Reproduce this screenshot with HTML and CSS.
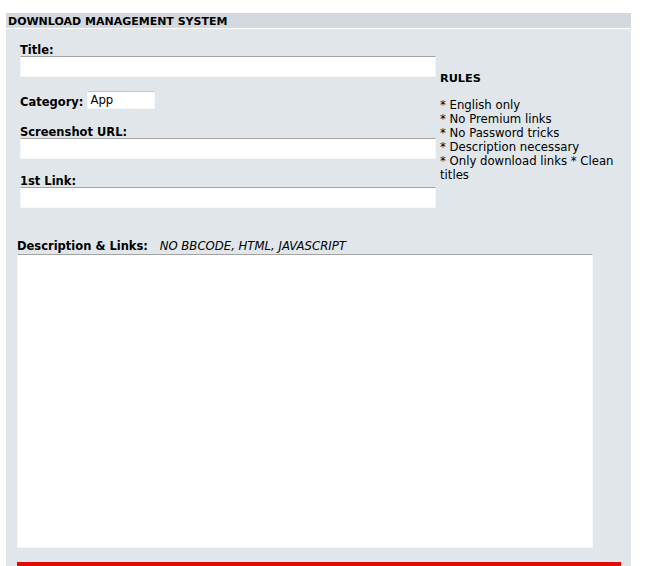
FILE: index.html
```html
<!DOCTYPE html>
<html lang="en">

<head>
  <meta charset="UTF-8">
  <title>Download Management System</title>
  <link rel="stylesheet" href="styles.css">
</head>

<body>
  <div class="box">
    <div class="box-head">DOWNLOAD MANAGEMENT SYSTEM</div>
    <div class="box-body">
      <div class="upload-row">
        <div class="fields">
          <label class="field-label">Title:</label>
          <input type="text" class="wide-input">

          <div class="category-row">
            <label class="field-label">Category:</label>
            <input type="text" class="small-input" value="App">
          </div>

          <label class="field-label">Screenshot URL:</label>
          <input type="text" class="wide-input">

          <label class="field-label link-label">1st Link:</label>
          <input type="text" class="wide-input">
        </div>

        <div class="rules">
          <h4>RULES</h4>
          <p>* English only<br>
            * No Premium links<br>
            * No Password tricks<br>
            * Description necessary<br>
            * Only download links * Clean titles</p>
        </div>
      </div>

      <div class="desc">
        <div class="desc-label"><b>Description &amp; Links:</b> <i>NO BBCODE, HTML, JAVASCRIPT</i></div>
        <textarea class="desc-box"></textarea>
      </div>

      <div class="red-bar"></div>
    </div>
  </div>
</body>

</html>
```

FILE: styles.css
```css
* {
  margin: 0;
  padding: 0;
  box-sizing: border-box;
}

body {
  background: white;
  color: #000;
  font-family: 'DejaVu Sans', Verdana, sans-serif;
  font-size: 11.7px;
}

.box {
  margin: 13px 0 0 6px;
  width: 625px;
}

.box-head {
  background: #d3d9df;
  height: 16px;
  line-height: 17px;
  padding-left: 2px;
  font-size: 11px;
  font-weight: bold;
  border-bottom: 1px solid white;
}

.box-body {
  background: #e1e6ea;
  padding: 12px 0 40px 11px;
}

.upload-row {
  display: flex;
}

.fields {
  width: 419px;
  padding-left: 3px;
}

.field-label {
  display: block;
  font-size: 11.5px;
  font-weight: bold;
  line-height: 14px;
  padding-top: 2px;
  margin-bottom: -1px;
}

.wide-input {
  display: block;
  width: 416px;
  height: 21px;
  border: 1px solid #f4f6f7;
  border-top-color: #a3a3a3;
  background: white;
  font-family: inherit;
  font-size: 11.7px;
}

.category-row {
  display: flex;
  align-items: center;
  gap: 4px;
  margin: 14px 0 14px;
}

.category-row .field-label {
  padding-top: 4px;
  margin-bottom: 0;
}

.small-input {
  width: 68px;
  height: 18px;
  border: 1px solid #f4f6f7;
  border-top-color: #c4c4c4;
  padding-left: 2px;
  background: white;
  font-family: inherit;
  font-size: 11.7px;
}

.link-label {
  margin-top: 13px;
}

.rules {
  padding: 31px 0 0 4px;
  width: 190px;
  line-height: 14px;
}

.rules h4 {
  font-size: 11.3px;
  margin-bottom: 12px;
}

.desc {
  margin-top: 31px;
}

.desc-label {
  line-height: 14px;
  margin-bottom: 1px;
}

.desc-label b {
  font-size: 11.5px;
}

.desc-label i {
  margin-left: 8px;
}

.desc-box {
  display: block;
  width: 576px;
  height: 294px;
  border: 1px solid #f4f6f7;
  border-top-color: #a3a3a3;
  background: white;
  resize: none;
  font-family: inherit;
  font-size: 11.7px;
}

.red-bar {
  width: 604px;
  height: 6px;
  margin-top: 14px;
  background: #e00a0a;
}
```
